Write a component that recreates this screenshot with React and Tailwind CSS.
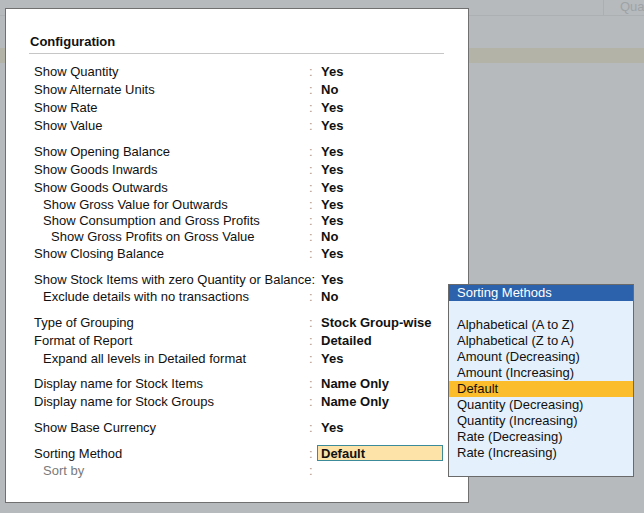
import React from 'react';

const groups = [
  [
    { label: 'Show Quantity', value: 'Yes' },
    { label: 'Show Alternate Units', value: 'No' },
    { label: 'Show Rate', value: 'Yes' },
    { label: 'Show Value', value: 'Yes' },
  ],
  [
    { label: 'Show Opening Balance', value: 'Yes' },
    { label: 'Show Goods Inwards', value: 'Yes' },
    { label: 'Show Goods Outwards', value: 'Yes', h: 'h-[17px]' },
    { label: 'Show Gross Value for Outwards', value: 'Yes', indent: 1, h: 'h-[16px]' },
    { label: 'Show Consumption and Gross Profits', value: 'Yes', indent: 1, h: 'h-[16px]' },
    { label: 'Show Gross Profits on Gross Value', value: 'No', indent: 2, h: 'h-[17px]' },
    { label: 'Show Closing Balance', value: 'Yes' },
  ],
  [
    { label: 'Show Stock Items with zero Quantity or Balance', value: 'Yes', inlineColon: true, h: 'h-[17px]' },
    { label: 'Exclude details with no transactions', value: 'No', indent: 1 },
  ],
  [
    { label: 'Type of Grouping', value: 'Stock Group-wise' },
    { label: 'Format of Report', value: 'Detailed' },
    { label: 'Expand all levels in Detailed format', value: 'Yes', indent: 1, h: 'h-[17px]' },
  ],
  [
    { label: 'Display name for Stock Items', value: 'Name Only' },
    { label: 'Display name for Stock Groups', value: 'Name Only' },
  ],
  [{ label: 'Show Base Currency', value: 'Yes' }],
  [
    { label: 'Sorting Method', value: 'Default', active: true, h: 'h-[17px]' },
    { label: 'Sort by', value: '', indent: 1, muted: true },
  ],
];

const methods = [
  'Alphabetical (A to Z)',
  'Alphabetical (Z to A)',
  'Amount (Decreasing)',
  'Amount (Increasing)',
  'Default',
  'Quantity (Decreasing)',
  'Quantity (Increasing)',
  'Rate (Decreasing)',
  'Rate (Increasing)',
];

function Row({ row }) {
  const pad = row.indent === 2 ? 'pl-[17px]' : row.indent === 1 ? 'pl-[9px]' : '';
  return (
    <div className={`flex ${row.h || 'h-[18px]'} leading-[18px]`}>
      <div
        className={`w-[275px] shrink-0 whitespace-nowrap ${pad} ${row.muted ? 'text-[#7a7a7a]' : 'text-[#111]'}`}
      >
        {row.label}
        {row.inlineColon && <span>:</span>}
      </div>
      <div className="w-[12px] shrink-0 text-[#9a9a9a]">{row.inlineColon ? '' : ':'}</div>
      {row.active ? (
        <div className="-ml-[4px] w-[126px] h-[16px] box-border border border-[#3b8b9a] bg-[#fee3a8] pl-[3px] leading-[16px] font-bold text-[#111]">
          {row.value}
        </div>
      ) : (
        <div className="font-bold text-[#111] whitespace-nowrap">{row.value}</div>
      )}
    </div>
  );
}

export default function App() {
  return (
    <div className="relative w-[644px] h-[513px] overflow-hidden bg-[#b6babd] text-[13px] font-['Liberation_Sans',Arial,sans-serif]">
      {/* page behind the dialog */}
      <div className="h-[16px] border-b border-[#acb0b3] flex justify-end">
        <div className="w-[41px] border-l border-[#abafb2] pl-[16px] leading-[14px] text-[#9ea3a6] whitespace-nowrap overflow-hidden">
          Qua
        </div>
      </div>
      <div className="mt-[32px] h-[15px] bg-[#b3b4a7]" />

      {/* Configuration dialog */}
      <div className="absolute left-[5px] top-[8px] w-[464px] h-[495px] border border-[#707070] bg-white pt-[24px]">
        <div className="ml-[23px] w-[415px] border-b border-[#c6c6c6] pb-[2px] pl-[1px]">
          <div className="h-[18px] leading-[18px] font-bold text-[#111]">Configuration</div>
        </div>
        <div className="ml-[28px] mt-[9px] flex flex-col gap-[8px]">
          {groups.map((g, i) => (
            <div key={i} className="flex flex-col">
              {g.map((row) => (
                <Row key={row.label} row={row} />
              ))}
            </div>
          ))}
        </div>
      </div>

      {/* Sorting Methods list */}
      <div className="absolute left-[448px] top-[284px] w-[186px] h-[193px] border border-[#6a6a6a] bg-[#e4f0fb]">
        <div className="h-[16px] leading-[16px] bg-[#2c62ac] text-white pl-[8px]">Sorting Methods</div>
        <div className="pt-[16px] flex flex-col">
          {methods.map((m) => (
            <div
              key={m}
              className={`h-[16px] leading-[16px] pl-[8px] text-[#111] ${m === 'Default' ? 'bg-[#fcbd2c]' : ''}`}
            >
              {m}
            </div>
          ))}
        </div>
      </div>
    </div>
  );
}
